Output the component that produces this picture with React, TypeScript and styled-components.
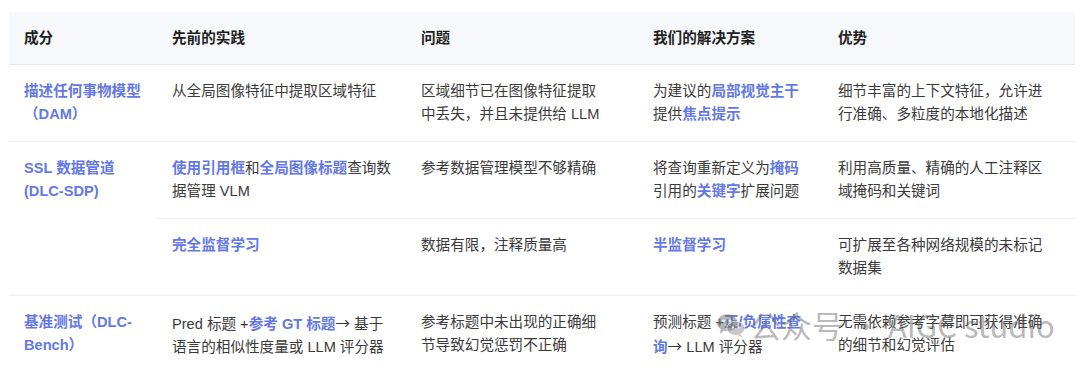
import React from "react";
import styled, { createGlobalStyle } from "styled-components";

const Global = createGlobalStyle`
  html, body { margin: 0; padding: 0; background: #ffffff; }
  body { font-family: "Liberation Sans", "Noto Sans CJK SC", sans-serif; }
`;

const Page = styled.div`
  position: relative;
  width: 1080px;
  height: 373px;
  overflow: hidden;
  padding: 12px 5px 0 9px;
  box-sizing: border-box;
`;

const Table = styled.table`
  width: 1066px;
  border-collapse: collapse;
  table-layout: fixed;
  font-size: 14.6px;
  line-height: 23px;
  color: #3a3a3a;
`;

const HeadRow = styled.tr`
  background: #f6f8fb;
  border-bottom: 1px solid #e3e7ee;
`;

const Th = styled.th`
  text-align: left;
  font-weight: 700;
  color: #1e1e1e;
  padding: 15px 15px 14px 15px;
`;

const Row = styled.tr<{ $last?: boolean }>`
  border-bottom: ${(p) => (p.$last ? "none" : "1px solid #eceef3")};
`;

const Td = styled.td<{ $pr?: number }>`
  vertical-align: top;
  padding: 15px ${(p) => p.$pr ?? 15}px 15px 15px;
  word-break: normal;
`;

const Em = styled.span`
  color: #6378e6;
  font-weight: 700;
`;

const Arrow = styled.span`
  font-family: "Noto Sans CJK SC", sans-serif;
  font-weight: 400;
  color: #3a3a3a;
`;

const Watermark = styled.div`
  position: absolute;
  left: 716px;
  top: 306px;
  display: flex;
  align-items: center;
  gap: 4px;
  font-family: "Noto Sans CJK SC", "Liberation Sans", sans-serif;
  font-size: 31px;
  font-weight: 400;
  color: rgba(95, 95, 95, 0.45);
  pointer-events: none;
  white-space: nowrap;
  line-height: 38px;
`;

const WeChat = () => (
  <svg width="30" height="27" viewBox="0 0 32 28" fill="none">
    <ellipse cx="12" cy="11" rx="11" ry="9" fill="rgba(110,110,110,0.5)" />
    <path d="M5 18 L4 23 L9 19 Z" fill="rgba(110,110,110,0.5)" />
    <ellipse cx="21" cy="17" rx="9.5" ry="7.5" fill="rgba(130,130,130,0.45)" stroke="rgba(255,255,255,0.7)" strokeWidth="1" />
    <path d="M26 23 L28 27 L23 24 Z" fill="rgba(130,130,130,0.45)" />
    <circle cx="8" cy="9" r="1.4" fill="rgba(255,255,255,0.85)" />
    <circle cx="15" cy="9" r="1.4" fill="rgba(255,255,255,0.85)" />
    <circle cx="18" cy="16" r="1.2" fill="rgba(255,255,255,0.85)" />
    <circle cx="24" cy="16" r="1.2" fill="rgba(255,255,255,0.85)" />
  </svg>
);

export default function App() {
  return (
    <>
      <Global />
      <Page>
        <Table>
          <colgroup>
            <col style={{ width: 148 }} />
            <col style={{ width: 249 }} />
            <col style={{ width: 232 }} />
            <col style={{ width: 185 }} />
            <col style={{ width: 252 }} />
          </colgroup>
          <thead>
            <HeadRow>
              <Th>成分</Th>
              <Th>先前的实践</Th>
              <Th>问题</Th>
              <Th>我们的解决方案</Th>
              <Th>优势</Th>
            </HeadRow>
          </thead>
          <tbody>
            <Row>
              <Td>
                <Em>描述任何事物模型（DAM）</Em>
              </Td>
              <Td>从全局图像特征中提取区域特征</Td>
              <Td $pr={30}>区域细节已在图像特征提取中丢失，并且未提供给 LLM</Td>
              <Td>
                为建议的<Em>局部视觉主干</Em>提供<Em>焦点提示</Em>
              </Td>
              <Td $pr={27}>细节丰富的上下文特征，允许进行准确、多粒度的本地化描述</Td>
            </Row>
            <Row>
              <Td rowSpan={2}>
                <Em>SSL 数据管道 (DLC-SDP)</Em>
              </Td>
              <Td>
                <Em>使用引用框</Em>和<Em>全局图像标题</Em>查询数据管理 VLM
              </Td>
              <Td $pr={30}>参考数据管理模型不够精确</Td>
              <Td>
                将查询重新定义为<Em>掩码</Em>引用的<Em>关键字</Em>扩展问题
              </Td>
              <Td $pr={27}>利用高质量、精确的人工注释区域掩码和关键词</Td>
            </Row>
            <Row>
              <Td>
                <Em>完全监督学习</Em>
              </Td>
              <Td $pr={30}>数据有限，注释质量高</Td>
              <Td>
                <Em>半监督学习</Em>
              </Td>
              <Td $pr={27}>可扩展至各种网络规模的未标记数据集</Td>
            </Row>
            <Row $last>
              <Td>
                <Em>基准测试（DLC-Bench）</Em>
              </Td>
              <Td>
                Pred 标题 +<Em>参考 GT 标题</Em><Arrow>→</Arrow> 基于语言的相似性度量或 LLM 评分器
              </Td>
              <Td $pr={30}>参考标题中未出现的正确细节导致幻觉惩罚不正确</Td>
              <Td $pr={10}>
                预测标题 +<Em>正/负属性查询</Em><Arrow>→</Arrow> LLM 评分器
              </Td>
              <Td $pr={27}>无需依赖参考字幕即可获得准确的细节和幻觉评估</Td>
            </Row>
          </tbody>
        </Table>
        <Watermark>
          <WeChat />
          <span>公众号 · AIGC studio</span>
        </Watermark>
      </Page>
    </>
  );
}
